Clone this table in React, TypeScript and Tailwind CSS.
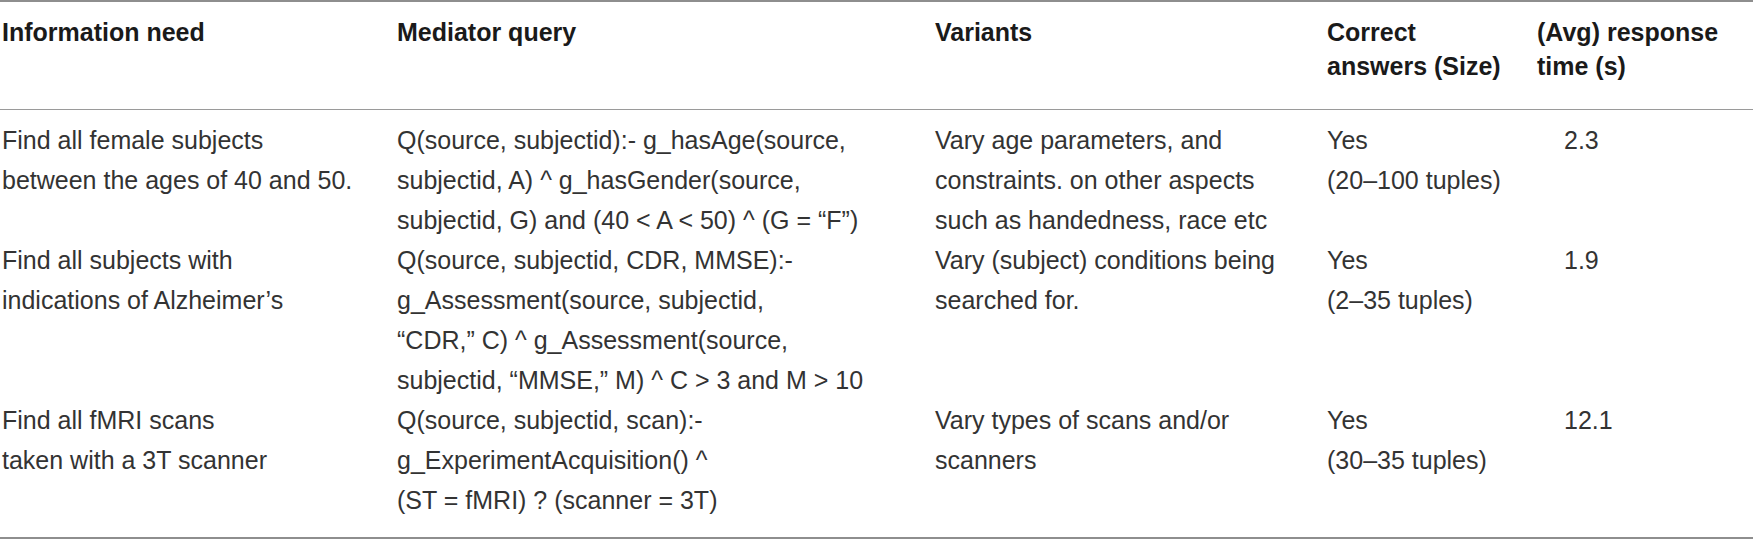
import React from 'react';

type Row = {
  need: string[];
  query: string[];
  variants: string[];
  correct: string[];
  time: string;
};

const ROWS: Row[] = [
  {
    need: ['Find all female subjects', 'between the ages of 40 and 50.'],
    query: [
      'Q(source, subjectid):- g_hasAge(source,',
      'subjectid, A) ^ g_hasGender(source,',
      'subjectid, G) and (40 < A < 50) ^ (G = \u201cF\u201d)',
    ],
    variants: [
      'Vary age parameters, and',
      'constraints. on other aspects',
      'such as handedness, race etc',
    ],
    correct: ['Yes', '(20\u2013100 tuples)'],
    time: '2.3',
  },
  {
    need: ['Find all subjects with', 'indications of Alzheimer\u2019s'],
    query: [
      'Q(source, subjectid, CDR, MMSE):-',
      'g_Assessment(source, subjectid,',
      '\u201cCDR,\u201d C) ^ g_Assessment(source,',
      'subjectid, \u201cMMSE,\u201d M) ^ C > 3 and M > 10',
    ],
    variants: ['Vary (subject) conditions being', 'searched for.'],
    correct: ['Yes', '(2\u201335 tuples)'],
    time: '1.9',
  },
  {
    need: ['Find all fMRI scans', 'taken with a 3T scanner'],
    query: [
      'Q(source, subjectid, scan):-',
      'g_ExperimentAcquisition() ^',
      '(ST = fMRI) ? (scanner = 3T)',
    ],
    variants: ['Vary types of scans and/or', 'scanners'],
    correct: ['Yes', '(30\u201335 tuples)'],
    time: '12.1',
  },
];

const COLS = 'grid grid-cols-[397px_538px_392px_210px_1fr]';

function Lines({ lines }: { lines: string[] }) {
  return (
    <div className="whitespace-nowrap">
      {lines.map((line) => (
        <div key={line}>{line}</div>
      ))}
    </div>
  );
}

export default function App() {
  return (
    <div className="h-[539px] w-[1753px] bg-white font-['Liberation_Sans',Arial,sans-serif]">
      <div className="border-y-2 border-[#8e8e8e]">
        {/* Header */}
        <div
          className={`${COLS} border-b border-[#9a9a9a] pt-[13px] pb-[26px] text-[25px] leading-[34px] font-bold text-[#1a1a1a]`}
        >
          <div className="pl-[2px]">Information need</div>
          <div>Mediator query</div>
          <div>Variants</div>
          <Lines lines={['Correct', 'answers (Size)']} />
          <Lines lines={['(Avg) response', 'time (s)']} />
        </div>

        {/* Body */}
        <div className="pt-[10px] pb-[17px] text-[25px] leading-[40px] text-[#333333]">
          {ROWS.map((row) => (
            <div key={row.time} className={COLS}>
              <div className="pl-[2px]">
                <Lines lines={row.need} />
              </div>
              <Lines lines={row.query} />
              <Lines lines={row.variants} />
              <Lines lines={row.correct} />
              <div className="pl-[27px]">{row.time}</div>
            </div>
          ))}
        </div>
      </div>
    </div>
  );
}
